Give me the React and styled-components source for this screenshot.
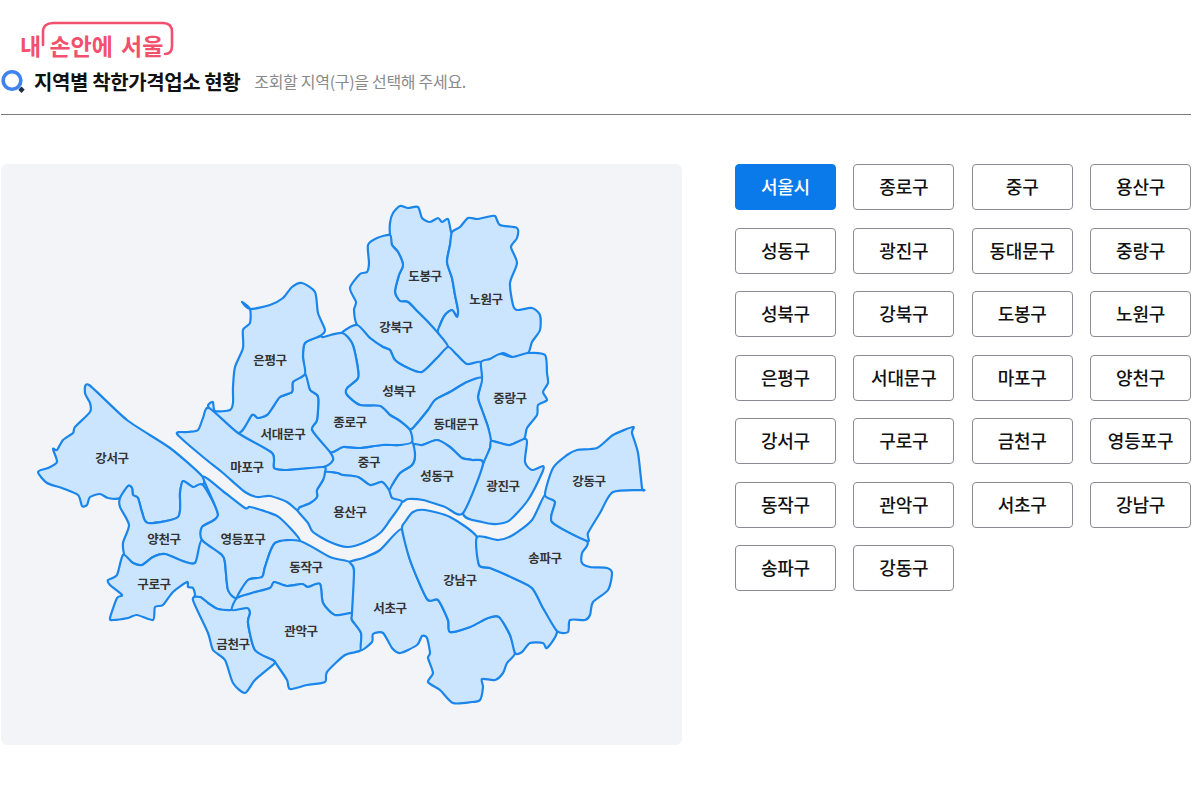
import React, { useState } from 'react';
import styled, { createGlobalStyle } from 'styled-components';

const GlobalStyle = createGlobalStyle`
  body {
    margin: 0;
    background: #fff;
    font-family: "Noto Sans CJK KR", "Noto Sans", sans-serif;
  }
`;

const Page = styled.div`
  width: 1191px;
  padding-left: 1px;
  box-sizing: border-box;
`;

const Header = styled.header`
  height: 115px;
  padding-top: 22px;
  box-sizing: border-box;
  border-bottom: 1px solid #7d7d7d;
`;

const Logo = styled.div`
  position: relative;
  width: 160px;
  height: 36px;
  margin-left: 19px;
  color: #f2506f;
  font-size: 23px;
  font-weight: 700;
  line-height: 46px;
  word-spacing: 3px;
  white-space: nowrap;
`;

const LogoFrame = styled.svg`
  position: absolute;
  left: 21px;
  top: -1px;
`;

const TitleRow = styled.div`
  display: flex;
  align-items: center;
  height: 24px;
  margin-top: 11px;
`;

const Title = styled.h1`
  margin: 0 14px 0 7px;
  color: #111;
  font-size: 20px;
  font-weight: 700;
  letter-spacing: -0.4px;
`;

const Subtitle = styled.span`
  color: #8a8a8a;
  font-size: 16px;
  letter-spacing: -0.3px;
`;

const Content = styled.main`
  display: flex;
  align-items: flex-start;
  gap: 53px;
  margin-top: 49px;
`;

const MapPanel = styled.section`
  width: 681px;
  height: 581px;
  flex: none;
  border-radius: 6px;
  background: #f2f4f8;
`;

const MapSvg = styled.svg`
  display: block;
  width: 100%;
  height: 100%;
`;

const DistrictShape = styled.path`
  fill: ${(p) => (p.$active ? '#8cc4ff' : '#cce5ff')};
  stroke: #1a85ea;
  stroke-width: 2.2;
  stroke-linejoin: round;
  cursor: pointer;
`;

const DistrictLabel = styled.text`
  fill: #333;
  font-size: 12.5px;
  font-weight: 700;
  letter-spacing: -0.3px;
  text-anchor: middle;
  dominant-baseline: central;
  pointer-events: none;
`;

const ButtonGrid = styled.nav`
  display: grid;
  grid-template-columns: repeat(4, 1fr);
  gap: 17.5px 17.5px;
  width: 456px;
`;

const DistrictButton = styled.button`
  height: 46px;
  padding: 0 0 2px;
  border: 1px solid ${(p) => (p.$active ? '#0a7aeb' : '#8b8b94')};
  border-radius: 4px;
  background: ${(p) => (p.$active ? '#0a7aeb' : '#fff')};
  color: ${(p) => (p.$active ? '#fff' : '#111')};
  font-family: inherit;
  font-size: 18px;
  font-weight: 500;
  letter-spacing: -0.2px;
  cursor: pointer;
`;

const districts = [
  { name: '도봉구', x: 425, y: 275, points: '390,223 393,213 400,206 408,208 418,207 422,218 430,222 438,218 442,222 448,219 451,232 452,233 450,245 447,262 452,278 455,295 458,310 457,317 452,310 445,315 440,325 438,333 428,322 418,312 408,302 400,301 395,292 399,275 403,265 398,252 392,245 390,235' },
  { name: '노원구', x: 486, y: 298, points: '452,232 460,227 468,218 477,219 487,217 495,216 500,225 517,228 517,238 511,247 517,263 510,283 513,305 517,310 532,308 540,315 540,330 532,342 528,353 513,357 503,353 490,359 482,362 468,365 457,355 448,347 438,333 440,325 445,315 452,310 457,317 458,310 455,295 452,278 447,262 450,245' },
  { name: '강북구', x: 396, y: 326, points: '390,235 377,238 368,245 369,263 367,272 360,274 350,288 356,302 354,310 357,325 370,338 383,347 390,350 395,360 408,368 422,372 437,358 448,347 438,333 428,322 418,312 408,302 400,301 395,292 399,275 403,265 398,252 392,245' },
  { name: '성북구', x: 399, y: 390, points: '357,325 370,338 383,347 390,350 395,360 408,368 422,372 437,358 448,347 457,355 467,364 481,362 482,378 467,382 450,392 435,400 428,410 413,428 408,430 400,421 390,415 380,406 360,405 347,395 347,388 358,378 357,363 352,343 342,333' },
  { name: '중랑구', x: 510, y: 397, points: '481,362 490,359 500,354 513,357 528,353 545,355 547,373 548,383 543,392 547,400 538,405 537,415 527,428 524,439 510,445 500,443 491,441 488,427 482,410 478,397 482,378' },
  { name: '동대문구', x: 456, y: 423, points: '482,378 478,397 482,410 488,427 491,441 490,448 483,464 472,460 462,458 450,447 437,440 422,445 412,444 410,430 413,428 428,410 435,400 450,392 467,382' },
  { name: '광진구', x: 503, y: 485, points: '491,441 500,443 510,445 524,439 527,442 525,462 532,470 543,466 542,473 528,500 510,520 497,524 482,522 463,513 483,464 490,448' },
  { name: '성동구', x: 437, y: 475, points: '412,444 422,445 437,440 450,447 462,458 472,460 483,464 463,513 445,507 423,500 408,499 402,502 392,498 389,490 392,485 400,473 412,465 415,455' },
  { name: '중구', x: 369, y: 461, points: '330,452 343,447 360,448 382,445 400,445 412,442 415,455 412,465 400,473 392,485 389,490 382,482 370,485 358,477 343,475 337,473 325,472 323,467 333,460' },
  { name: '용산구', x: 350, y: 511, points: '325,472 337,473 343,475 358,477 370,485 382,482 389,490 392,498 402,502 390,520 380,533 363,543 347,547 330,542 313,532 308,523 297,510 300,507 310,503 317,497 317,490 323,480' },
  { name: '종로구', x: 350, y: 421, points: '305,343 320,336 323,337 342,333 352,343 357,363 358,378 347,388 347,395 360,405 380,406 390,415 400,421 410,430 412,442 400,445 382,445 360,448 343,447 330,452 312,430 317,420 318,397 310,390 305,374 303,357' },
  { name: '서대문구', x: 283, y: 433, points: '305,374 293,382 292,392 280,397 273,407 267,415 258,418 252,415 238,433 272,453 274,468 287,470 323,467 333,460 330,452 312,430 317,420 318,397 310,390' },
  { name: '은평구', x: 270, y: 359, points: '242,302 250,309 270,305 283,298 292,287 302,283 315,292 318,313 325,330 320,336 305,343 303,357 305,374 293,382 292,392 280,397 273,407 267,415 258,418 252,415 238,433 209,408 213,402 215,411 230,410 233,403 233,387 235,367 243,348 243,330 250,323 250,309' },
  { name: '마포구', x: 247, y: 466, points: '177,434 188,432 198,430 203,418 209,408 238,433 272,453 274,468 287,470 323,467 325,472 323,480 317,490 317,497 310,503 300,507 297,510 287,502 270,496 257,497 245,492 223,473 203,457' },
  { name: '강서구', x: 112, y: 457, points: '89,385 85,393 90,403 90,412 75,427 73,433 63,440 57,450 53,449 57,462 48,468 38,472 47,483 62,488 78,495 82,506 87,505 90,497 100,494 108,498 120,498 128,486 132,488 133,495 138,498 142,512 148,523 178,517 180,493 183,481 193,487 203,485 202,476 170,448 127,420' },
  { name: '양천구', x: 164, y: 538, points: '120,498 128,486 132,488 133,495 138,498 142,512 148,523 178,517 180,493 183,481 193,487 203,485 218,515 202,527 202,540 195,563 180,560 165,554 153,557 142,565 133,563 125,557 123,543 129,525 120,507' },
  { name: '구로구', x: 154, y: 583, points: '123,555 133,563 142,565 153,557 165,554 180,560 195,563 202,540 222,555 225,563 228,590 237,598 232,610 218,609 208,603 200,597 193,600 195,595 193,588 188,587 187,582 173,592 163,605 155,607 153,620 137,615 128,618 113,620 110,618 117,598 122,595 110,585 108,580 117,575' },
  { name: '영등포구', x: 243, y: 538, points: '203,477 224,492 245,508 250,507 267,512 280,518 300,541 275,543 265,567 262,577 248,580 237,598 228,590 225,563 222,555 202,540 202,527 218,515' },
  { name: '금천구', x: 233, y: 643, points: '193,600 200,597 208,603 218,609 232,610 247,608 250,613 248,623 255,650 273,660 275,663 255,680 245,693 233,683 225,660 213,650 208,633' },
  { name: '동작구', x: 306, y: 566, points: '300,541 330,557 350,562 354,570 352,613 335,615 323,603 320,584 308,587 302,584 287,586 274,582 270,588 252,593 237,598 248,580 262,577 265,567 275,543' },
  { name: '관악구', x: 301, y: 630, points: '237,598 252,593 270,588 274,582 287,586 302,584 308,587 320,584 323,603 335,615 352,613 352,620 361,633 361,650 345,655 327,672 325,682 307,685 290,689 287,680 277,665 273,660 255,650 248,623 250,613 247,608 232,610' },
  { name: '서초구', x: 390, y: 607, points: '350,562 363,558 380,550 402,529 410,560 427,599 438,600 448,620 450,632 470,627 488,618 499,617 510,635 515,653 507,663 503,673 495,680 482,679 483,687 480,700 472,702 453,703 440,690 428,682 433,673 428,658 430,653 427,638 422,636 417,645 400,653 392,648 383,633 373,634 372,642 361,650 361,633 352,620 352,613 354,570' },
  { name: '강남구', x: 460, y: 579, points: '402,529 405,522 413,512 425,510 450,517 477,537 479,565 490,568 513,578 532,588 543,608 557,631 547,648 543,643 530,643 522,652 515,653 510,635 499,617 488,618 470,627 450,632 448,620 438,600 427,599 410,560' },
  { name: '송파구', x: 545, y: 557, points: '477,537 498,540 513,535 532,520 545,495 555,502 552,522 587,541 582,553 582,563 590,567 607,568 612,573 608,590 593,602 590,615 585,620 570,620 568,632 557,631 543,608 532,588 513,578 490,568 479,565' },
  { name: '강동구', x: 589, y: 480, points: '545,495 553,468 567,455 577,450 597,448 613,435 633,427 632,433 638,453 642,488 643,490 613,492 600,513 588,533 587,541 552,522 555,502' },
];

const buttonNames = [
  '서울시', '종로구', '중구', '용산구',
  '성동구', '광진구', '동대문구', '중랑구',
  '성북구', '강북구', '도봉구', '노원구',
  '은평구', '서대문구', '마포구', '양천구',
  '강서구', '구로구', '금천구', '영등포구',
  '동작구', '관악구', '서초구', '강남구',
  '송파구', '강동구',
];

// closed curve through every traced point, so neighbours still meet at the corners
function toCurve(points) {
  const pts = points.split(' ').map((p) => p.split(',').map(Number));
  const at = (i) => pts[(i + pts.length) % pts.length];
  let d = `M${pts[0][0]} ${pts[0][1]}`;
  pts.forEach((p, i) => {
    const prev = at(i - 1);
    const next = at(i + 1);
    const after = at(i + 2);
    const c1x = p[0] + (next[0] - prev[0]) / 8;
    const c1y = p[1] + (next[1] - prev[1]) / 8;
    const c2x = next[0] - (after[0] - p[0]) / 8;
    const c2y = next[1] - (after[1] - p[1]) / 8;
    d += `C${c1x} ${c1y} ${c2x} ${c2y} ${next[0]} ${next[1]}`;
  });
  return `${d}Z`;
}

function SearchIcon() {
  return (
    <svg width="26" height="26" viewBox="0 0 26 26" aria-hidden="true">
      <circle cx="11" cy="12.5" r="8.8" fill="none" stroke="#3f83f0" strokeWidth="3.6" />
      <path d="M20.5 18.5l3.2 3.2-3.2 3.2-3.2-3.2z" fill="#1d2c4c" />
    </svg>
  );
}

export default function App() {
  const [selected, setSelected] = useState('서울시');

  return (
    <Page>
      <GlobalStyle />
      <Header>
        <Logo>
          <LogoFrame width="136" height="38" viewBox="0 0 136 38" aria-hidden="true">
            <path
              d="M2 24V11C2 5 6 2 12 2H122C128 2 131 5 131 11V25C131 30 129 33 124 33"
              fill="none"
              stroke="#f2506f"
              strokeWidth="2.6"
              strokeLinecap="round"
            />
          </LogoFrame>
          내 손안에 서울
        </Logo>
        <TitleRow>
          <SearchIcon />
          <Title>지역별 착한가격업소 현황</Title>
          <Subtitle>조회할 지역(구)을 선택해 주세요.</Subtitle>
        </TitleRow>
      </Header>
      <Content>
        <MapPanel>
          <MapSvg viewBox="1 164 681 581">
            {districts.map((d) => (
              <DistrictShape
                key={d.name}
                d={toCurve(d.points)}
                $active={selected === d.name}
                onClick={() => setSelected(d.name)}
              />
            ))}
            {districts.map((d) => (
              <DistrictLabel key={d.name} x={d.x} y={d.y}>{d.name}</DistrictLabel>
            ))}
          </MapSvg>
        </MapPanel>
        <ButtonGrid>
          {buttonNames.map((name) => (
            <DistrictButton
              key={name}
              $active={selected === name}
              onClick={() => setSelected(name)}
            >
              {name}
            </DistrictButton>
          ))}
        </ButtonGrid>
      </Content>
    </Page>
  );
}
